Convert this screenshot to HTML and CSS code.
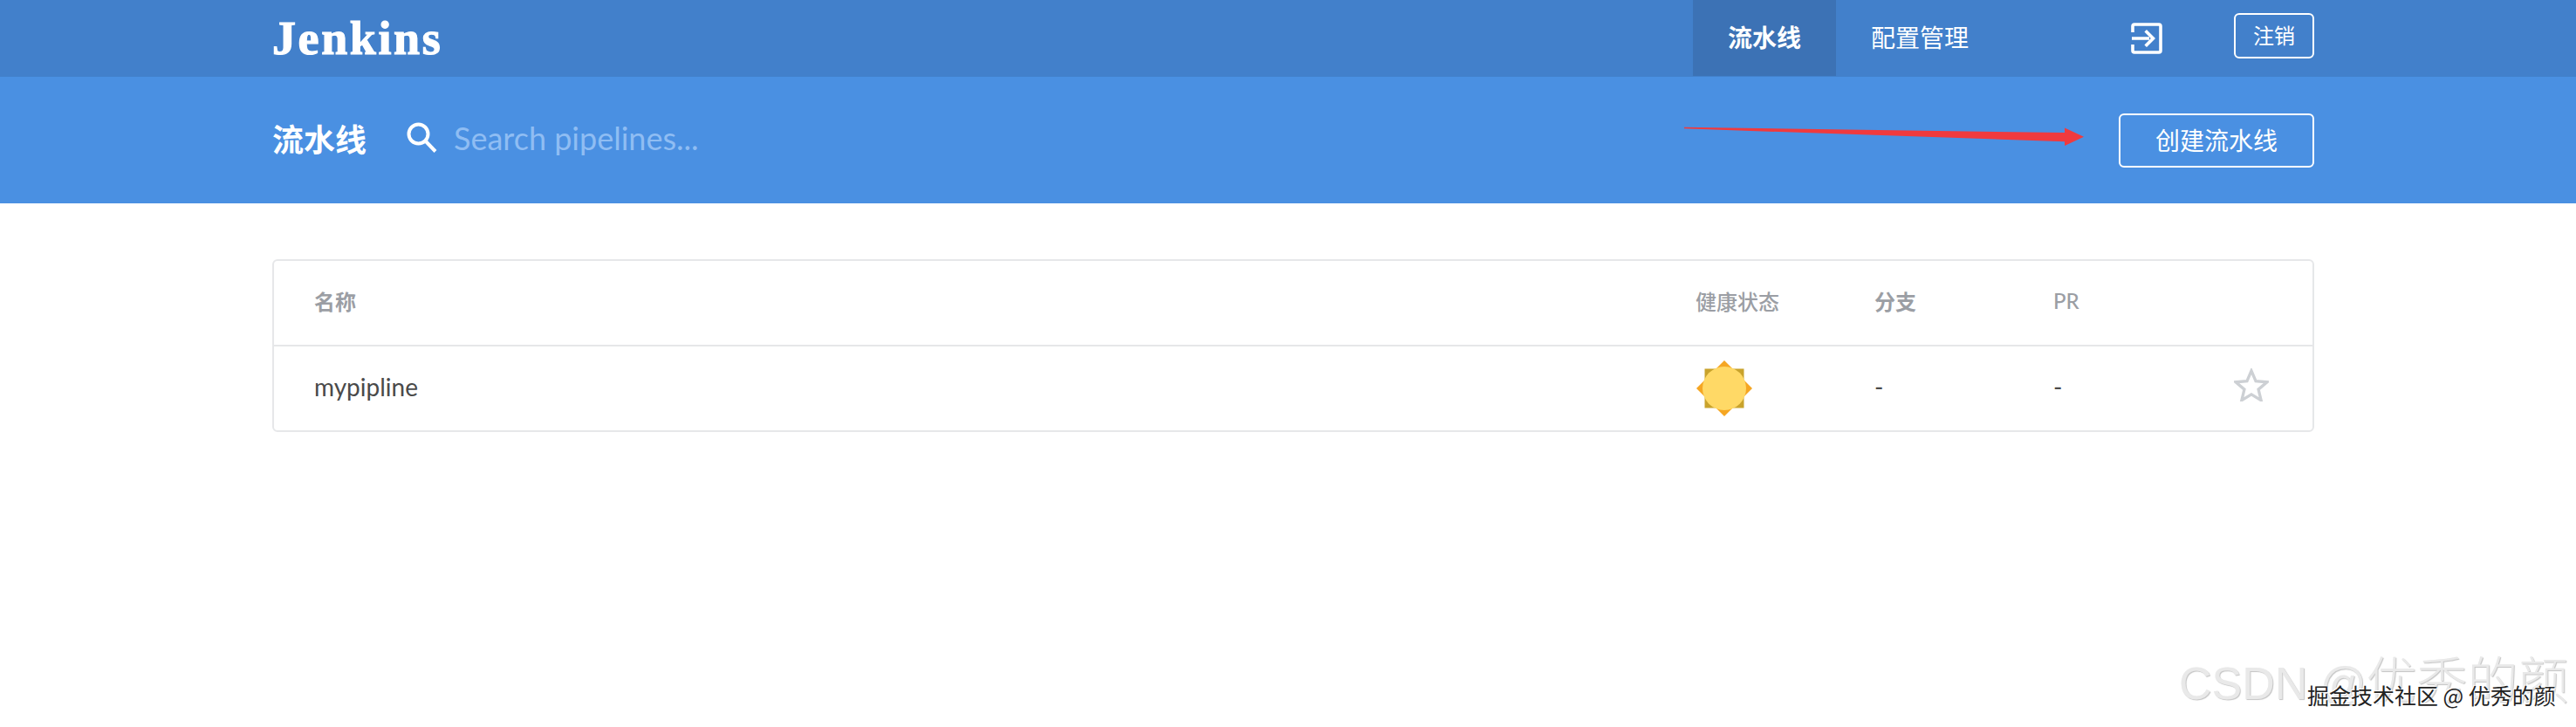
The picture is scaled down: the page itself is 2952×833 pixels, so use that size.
FILE: index.html
```html
<!DOCTYPE html>
<html lang="zh">
<head>
<meta charset="utf-8">
<title>Jenkins</title>
<link rel="stylesheet" href="styles.css">
</head>
<body>
<header class="topbar">
  <div class="wrap topbar-inner">
    <div class="logo">Jenkins</div>
    <nav class="nav">
      <a class="tab tab-active">流水线</a>
      <a class="tab">配置管理</a>
    </nav>
    <svg class="exit-icon" viewBox="0 0 36 36"><path d="M2 11V4a2 2 0 0 1 2-2h28a2 2 0 0 1 2 2v28a2 2 0 0 1-2 2H4a2 2 0 0 1-2-2v-7" fill="none" stroke="#fff" stroke-width="3.600"/><path d="M1 16.200h20v3.600H1zM18 8l10 10-10 10-2.600-2.600 7.400-7.400-7.400-7.400z" fill="#fff"/></svg>
    <a class="logout">注销</a>
  </div>
</header>
<section class="subbar">
  <div class="wrap subbar-inner">
    <h1 class="title">流水线</h1>
    <svg class="search-icon" viewBox="0 0 36 36"><circle cx="13.5" cy="13.5" r="11" fill="none" stroke="#fff" stroke-width="4"/><path d="M21.5 21.5L33 33.5" stroke="#fff" stroke-width="4" fill="none"/></svg>
    <span class="placeholder">Search pipelines...</span>
    <a class="create">创建流水线</a>
  </div>
</section>
<main class="wrap content">
  <div class="card">
    <div class="row row-head">
      <div>名称</div>
      <div class="health-head">健康状态</div>
      <div>分支</div>
      <div class="pr-head">PR</div>
    </div>
    <div class="row row-body">
      <div class="name">mypipline</div>
      <div class="sun-cell">
        <svg class="sun" viewBox="0 0 66 66"><path d="M33 1L65 33L33 65L1 33z" fill="#f5a623"/><path d="M10.500 10.500h45v45h-45z" fill="#c9a32c"/><circle cx="33" cy="33" r="25" fill="#ffd966"/></svg>
      </div>
      <div class="dash">-</div>
      <div class="dash">-</div>
      <div class="star-cell">
        <svg class="star" viewBox="0 0 42 40"><path d="M21 3l5.300 12.500 13.500 1.100-10.300 8.800 3.200 13.200L21 31.500 9.300 38.600l3.200-13.200L2.200 16.600l13.500-1.100z" fill="none" stroke="#cdd0d4" stroke-width="3.500"/></svg>
      </div>
    </div>
  </div>
</main>
<svg class="arrow" viewBox="0 0 460 28" preserveAspectRatio="none"><path d="M0 1L436 9V2L458 15L436 28V22L0 3z" fill="#f03a3e"/></svg>
<div class="mark-csdn">CSDN @<span class="mark-cjk">优秀的颜</span></div>
<div class="mark-juejin">掘金技术社区 @ 优秀的颜</div>
</body>
</html>
```
FILE: styles.css
```css
* { box-sizing: border-box; }
html, body { margin: 0; padding: 0; }
body {
  position: relative;
  height: 833px;
  overflow: hidden;
  background: #fff;
  font-family: "Lato", "Noto Sans CJK SC", sans-serif;
}
.wrap { width: 2340px; margin-left: 312px; }
.topbar { height: 88px; background: #4280cb; }
.topbar-inner { display: flex; align-items: center; height: 88px; }
.logo {
  font-family: "Liberation Serif", serif;
  font-weight: 700;
  font-size: 54px;
  letter-spacing: 2.6px;
  -webkit-text-stroke: 1.2px #fff;
  color: #fff;
  line-height: 84px;
  margin-right: auto;
}
.nav { display: flex; height: 87px; align-self: flex-start; }
.tab {
  display: flex;
  align-items: center;
  justify-content: center;
  padding: 0 40px 4px;
  font-size: 28px;
  color: #fff;
}
.tab-active { width: 164px; font-weight: 700; background: #3c72b5; }
.exit-icon { width: 36px; height: 36px; margin-left: 146px; }
.logout {
  display: flex;
  align-items: center;
  justify-content: center;
  align-self: flex-start;
  width: 92px;
  height: 52px;
  margin-top: 15px;
  margin-left: 82px;
  border: 2px solid #fff;
  border-radius: 6px;
  padding-bottom: 4px;
  font-size: 24px;
  color: #fff;
}
.subbar { height: 145px; background: #4a90e2; }
.subbar-inner { display: flex; align-items: center; height: 145px; }
.title { margin: 0 0 6px; font-size: 36px; font-weight: 700; color: #fff; }
.search-icon { width: 36px; height: 36px; margin: 0 0 6px 46px; }
.placeholder { margin: 0 0 6px 18px; font-size: 36px; color: #8fbdf3; }
.create {
  display: flex;
  align-items: center;
  justify-content: center;
  width: 224px;
  height: 62px;
  margin-left: auto;
  padding-bottom: 2px;
  border: 2px solid #fff;
  border-radius: 6px;
  font-size: 28px;
  color: #fff;
}
.content { padding-top: 64px; }
.card {
  height: 198px;
  border: 2px solid #e6e7e9;
  border-radius: 6px;
  background: #fff;
}
.row {
  display: grid;
  grid-template-columns: 1583px 205px 205px 1fr auto;
  align-items: center;
  padding: 0 46px;
}
.row-head {
  height: 98px;
  padding-bottom: 6px;
  border-bottom: 2px solid #e6e7e9;
  font-size: 24px;
  font-weight: 700;
  color: #9b9ea4;
}
.health-head, .pr-head { font-weight: 500; }
.row-body { height: 96px; padding-bottom: 4px; font-size: 28px; color: #4a4a4a; }
.sun-cell { display: flex; }
.sun { width: 66px; height: 66px; margin-top: 3px; }
.dash { font-size: 28px; color: #4a4a4a; }
.star-cell { display: flex; justify-content: flex-end; }
.star { width: 40px; height: 38px; margin: -4px 4px 0 0; }
.arrow {
  position: absolute;
  left: 1930px;
  top: 145px;
  width: 460px;
  height: 22px;
}
.mark-csdn {
  position: absolute;
  left: 2497px;
  top: 746px;
  white-space: nowrap;
  font-family: "Liberation Sans", "Noto Sans CJK SC", sans-serif;
  font-size: 52px;
  line-height: 70px;
  color: #e9e9e9;
  text-shadow: 1px 1px 1px #c4c4c4;
}
.mark-cjk { font-size: 58px; font-weight: 300; }
.mark-juejin {
  position: absolute;
  left: 2644px;
  top: 780px;
  white-space: nowrap;
  font-family: "Noto Sans CJK SC", sans-serif;
  font-size: 25px;
  line-height: 32px;
  color: #222;
  text-shadow: 1px 1px 0 #fff, -1px -1px 0 #fff;
}
```
